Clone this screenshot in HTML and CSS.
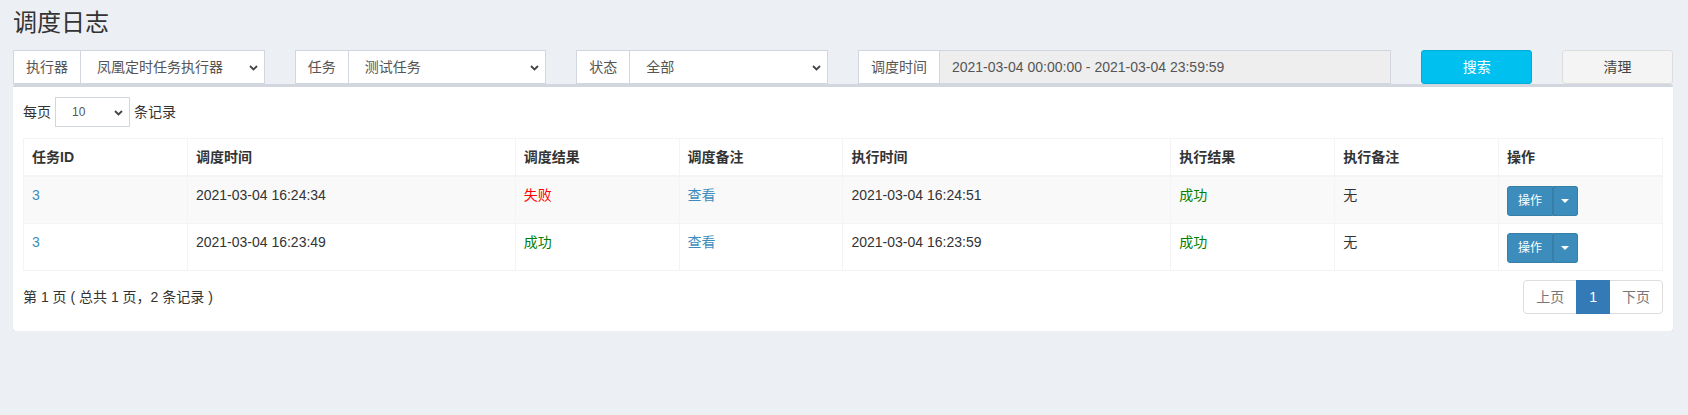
FILE: index.html
```html
<!DOCTYPE html>
<html lang="zh">
<head>
<meta charset="utf-8">
<title>调度日志</title>
<link rel="stylesheet" href="styles.css">
</head>
<body>
<div class="page">
  <h1 class="title">调度日志</h1>
  <div class="filters">
    <div class="col col-2">
      <div class="igroup">
        <span class="addon">执行器</span>
        <div class="select"><span>凤凰定时任务执行器</span><svg class="chev" width="9" height="6" viewBox="0 0 9 6"><path d="M1 1L4.5 4.5L8 1" fill="none" stroke="#444" stroke-width="1.8"/></svg></div>
      </div>
    </div>
    <div class="col col-2">
      <div class="igroup">
        <span class="addon">任务</span>
        <div class="select"><span>测试任务</span><svg class="chev" width="9" height="6" viewBox="0 0 9 6"><path d="M1 1L4.5 4.5L8 1" fill="none" stroke="#444" stroke-width="1.8"/></svg></div>
      </div>
    </div>
    <div class="col col-2">
      <div class="igroup">
        <span class="addon">状态</span>
        <div class="select"><span>全部</span><svg class="chev" width="9" height="6" viewBox="0 0 9 6"><path d="M1 1L4.5 4.5L8 1" fill="none" stroke="#444" stroke-width="1.8"/></svg></div>
      </div>
    </div>
    <div class="col col-4">
      <div class="igroup">
        <span class="addon">调度时间</span>
        <div class="input readonly">2021-03-04 00:00:00 - 2021-03-04 23:59:59</div>
      </div>
    </div>
    <div class="col col-1"><button class="btn btn-info">搜索</button></div>
    <div class="col col-1"><button class="btn btn-default">清理</button></div>
  </div>

  <div class="box">
    <div class="box-body">
      <div class="length">
        <span>每页</span>
        <div class="select small"><span>10</span><svg class="chev" width="9" height="6" viewBox="0 0 9 6"><path d="M1 1L4.5 4.5L8 1" fill="none" stroke="#444" stroke-width="1.8"/></svg></div>
        <span>条记录</span>
      </div>
      <table class="grid">
        <colgroup>
          <col class="w10"><col class="w20"><col class="w10"><col class="w10"><col class="w20"><col class="w10"><col class="w10"><col class="w10">
        </colgroup>
        <thead>
          <tr><th>任务ID</th><th>调度时间</th><th>调度结果</th><th>调度备注</th><th>执行时间</th><th>执行结果</th><th>执行备注</th><th>操作</th></tr>
        </thead>
        <tbody>
          <tr class="odd">
            <td><a class="link">3</a></td>
            <td>2021-03-04 16:24:34</td>
            <td><span class="fail">失败</span></td>
            <td><a class="link">查看</a></td>
            <td>2021-03-04 16:24:51</td>
            <td><span class="ok">成功</span></td>
            <td>无</td>
            <td class="ops"><div class="btn-group"><button class="bp main">操作</button><button class="bp caret-btn"><span class="caret"></span></button></div></td>
          </tr>
          <tr>
            <td><a class="link">3</a></td>
            <td>2021-03-04 16:23:49</td>
            <td><span class="ok">成功</span></td>
            <td><a class="link">查看</a></td>
            <td>2021-03-04 16:23:59</td>
            <td><span class="ok">成功</span></td>
            <td>无</td>
            <td class="ops"><div class="btn-group"><button class="bp main">操作</button><button class="bp caret-btn"><span class="caret"></span></button></div></td>
          </tr>
        </tbody>
      </table>
      <div class="footer">
        <div class="info">第 1 页 ( 总共 1 页，2 条记录 )</div>
        <div class="pager">
          <span class="pg first">上页</span>
          <span class="pg active">1</span>
          <span class="pg last">下页</span>
        </div>
      </div>
    </div>
  </div>
</div>
</body>
</html>
```

FILE: styles.css
```css
* { box-sizing: border-box; }
html, body { margin: 0; padding: 0; }
body {
  background: #ecf0f5;
  font-family: "Liberation Sans", "Noto Sans CJK SC", sans-serif;
  font-size: 14px;
  line-height: 20px;
  color: #333;
}
.page {
  padding: 0 15px 0 13px;
}
.title {
  margin: 0;
  padding-top: 10px;
  font-size: 24px;
  line-height: 26px;
  font-weight: normal;
  color: #333;
}
.filters {
  display: flex;
  margin: 14px -15px 0;
}
.col { padding: 0 15px; }
.col-1 { flex: 0 0 8.33333%; }
.col-2 { flex: 0 0 16.66667%; }
.col-4 { flex: 0 0 33.33333%; }
.igroup {
  display: flex;
  height: 34px;
}
.addon {
  flex: none;
  padding: 6px 12px;
  border: 1px solid #d2d6de;
  border-right: 0;
  background: #fff;
  color: #555;
  line-height: 20px;
}
.select, .input {
  flex: 1;
  min-width: 0;
  display: flex;
  align-items: center;
  justify-content: space-between;
  border: 1px solid #d2d6de;
  background: #fff;
  color: #555;
  padding: 0 6px 0 16px;
  white-space: nowrap;
}
.input { padding: 0 12px; }
.readonly { background: #eee; }
.chev { flex: none; margin-top: 1px; }
.btn {
  width: 100%;
  height: 34px;
  border-radius: 3px;
  font: inherit;
  line-height: 20px;
  border: 1px solid transparent;
  padding: 6px 12px;
}
.btn-info { background: #00c0ef; border-color: #00acd6; color: #fff; }
.btn-default { background: #f4f4f4; border-color: #ddd; color: #444; }

.box {
  background: #fff;
  border-top: 3px solid #d2d6de;
  border-radius: 3px;
  box-shadow: 0 1px 1px rgba(0,0,0,0.1);
}
.box-body { padding: 10px; }
.length {
  display: flex;
  align-items: center;
  gap: 4px;
  height: 30px;
}
.select.small {
  flex: none;
  width: 75px;
  height: 30px;
  font-size: 12px;
  padding-right: 6px;
}
.grid {
  width: 100%;
  margin-top: 11px;
  border-collapse: collapse;
  table-layout: fixed;
  border: 1px solid #f4f4f4;
}
.w10 { width: 10%; }
.w20 { width: 20%; }
.grid th, .grid td {
  border: 1px solid #f4f4f4;
  padding: 8px;
  text-align: left;
  line-height: 20px;
}
.grid th {
  font-weight: bold;
  border-bottom: 2px solid #f4f4f4;
  vertical-align: bottom;
  color: #333;
}
.grid td { vertical-align: top; }
.grid td.ops { padding: 9px 8px 7px; }
.grid tr.odd td { background: #f9f9f9; }
.link { color: #3c8dbc; text-decoration: none; }
.fail { color: #ff0000; }
.ok { color: #008000; }
.btn-group { display: flex; }
.bp {
  height: 30px;
  font: inherit;
  font-size: 12px;
  line-height: 18px;
  background: #3c8dbc;
  border: 1px solid #367fa9;
  color: #fff;
  padding: 5px 10px;
}
.bp.main { border-radius: 3px 0 0 3px; }
.bp.caret-btn {
  border-left: 0;
  border-radius: 0 3px 3px 0;
  padding: 5px 8px;
  display: flex;
  align-items: center;
  box-shadow: inset 1px 0 0 #367fa9;
}
.caret {
  display: block;
  width: 0; height: 0;
  border-top: 4px solid #fff;
  border-left: 4px solid transparent;
  border-right: 4px solid transparent;
}
.footer {
  display: flex;
  justify-content: space-between;
  align-items: center;
  margin-top: 7px;
  padding-bottom: 5px;
}
.info { color: #333; }
.pager {
  display: flex;
  margin: 2px 0;
}
.pg {
  padding: 6px 12px;
  line-height: 20px;
  border: 1px solid #ddd;
  margin-left: -1px;
  color: #777;
  background: #fff;
}
.pg.first { margin-left: 0; border-radius: 4px 0 0 4px; }
.pg.last { border-radius: 0 4px 4px 0; }
.pg.active {
  background: #337ab7;
  border-color: #337ab7;
  color: #fff;
  position: relative;
  z-index: 1;
}
```
